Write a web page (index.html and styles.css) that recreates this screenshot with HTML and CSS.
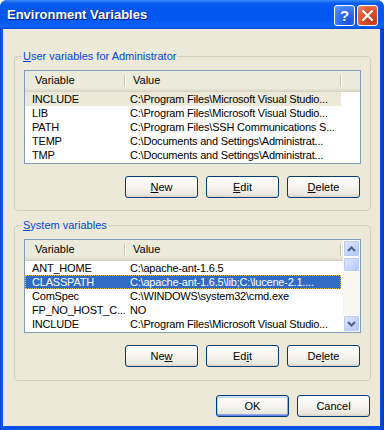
FILE: index.html
```html
<!DOCTYPE html>
<html lang="en">

<head>
    <meta charset="UTF-8">
    <meta name="viewport" content="width=device-width, initial-scale=1.0">
    <title>Environment Variables</title>
    <link rel="stylesheet" href="styles.css">
</head>

<body>
    <div class="window">
        <!-- title bar -->
        <div class="titlebar">
            <span class="title">Environment Variables</span>
            <div class="caption-buttons">
                <span class="cap help">?</span>
                <span class="cap close">
                    <svg width="13" height="13" viewBox="0 0 13 13">
                        <path d="M2 2 L11 11 M11 2 L2 11" stroke="#fff" stroke-width="2.2" stroke-linecap="round" />
                    </svg>
                </span>
            </div>
        </div>

        <div class="frame">
            <div class="client">
                <!-- user variables -->
                <fieldset class="group">
                    <legend><u>U</u>ser variables for Administrator</legend>
                    <div class="list">
                        <div class="list-main">
                            <div class="header">
                                <div class="hcol hvar">Variable</div>
                                <div class="hcol hval">Value</div>
                            </div>
                            <div class="row inactive"><span class="cvar">INCLUDE</span><span class="cval">C:\Program Files\Microsoft Visual Studio...</span></div>
                            <div class="row"><span class="cvar">LIB</span><span class="cval">C:\Program Files\Microsoft Visual Studio...</span></div>
                            <div class="row"><span class="cvar">PATH</span><span class="cval">C:\Program Files\SSH Communications S...</span></div>
                            <div class="row"><span class="cvar">TEMP</span><span class="cval">C:\Documents and Settings\Administrat...</span></div>
                            <div class="row"><span class="cvar">TMP</span><span class="cval">C:\Documents and Settings\Administrat...</span></div>
                        </div>
                    </div>
                    <div class="buttons">
                        <button class="btn"><u>N</u>ew</button>
                        <button class="btn"><u>E</u>dit</button>
                        <button class="btn"><u>D</u>elete</button>
                    </div>
                </fieldset>

                <!-- system variables -->
                <fieldset class="group second">
                    <legend><u>S</u>ystem variables</legend>
                    <div class="list">
                        <div class="list-main">
                            <div class="header">
                                <div class="hcol hvar">Variable</div>
                                <div class="hcol hval">Value</div>
                            </div>
                            <div class="row"><span class="cvar">ANT_HOME</span><span class="cval">C:\apache-ant-1.6.5</span></div>
                            <div class="row selected"><span class="cvar">CLASSPATH</span><span class="cval">C:\apache-ant-1.6.5\lib;C:\lucene-2.1....</span></div>
                            <div class="row"><span class="cvar">ComSpec</span><span class="cval">C:\WINDOWS\system32\cmd.exe</span></div>
                            <div class="row"><span class="cvar">FP_NO_HOST_C...</span><span class="cval">NO</span></div>
                            <div class="row"><span class="cvar">INCLUDE</span><span class="cval">C:\Program Files\Microsoft Visual Studio...</span></div>
                        </div>
                        <div class="scrollbar">
                            <div class="sb-btn">
                                <svg width="9" height="6" viewBox="0 0 9 6"><path d="M1 5 L4.5 1.5 L8 5" fill="none" stroke="#4D6185" stroke-width="2" /></svg>
                            </div>
                            <div class="sb-thumb"></div>
                            <div class="sb-track"></div>
                            <div class="sb-btn">
                                <svg width="9" height="6" viewBox="0 0 9 6"><path d="M1 1 L4.5 4.5 L8 1" fill="none" stroke="#4D6185" stroke-width="2" /></svg>
                            </div>
                        </div>
                    </div>
                    <div class="buttons">
                        <button class="btn">Ne<u>w</u></button>
                        <button class="btn">Ed<u>i</u>t</button>
                        <button class="btn">De<u>l</u>ete</button>
                    </div>
                </fieldset>

                <!-- OK / Cancel -->
                <div class="dialog-buttons">
                    <button class="btn default">OK</button>
                    <button class="btn">Cancel</button>
                </div>
            </div>
        </div>
    </div>
</body>

</html>
```

FILE: styles.css
```css
body {
    margin: 0;
    background-color: #fff;
    font-family: "Liberation Sans", Arial, sans-serif;
    font-size: 11px;
    color: #000;
}

.window {
    width: 384px;
    height: 430px;
    display: flex;
    flex-direction: column;
    border-radius: 7px 7px 0 0;
    overflow: hidden;
    background-color: #0A50E4;
}

/* title bar */
.titlebar {
    height: 29px;
    flex-shrink: 0;
    display: flex;
    align-items: center;
    justify-content: space-between;
    padding: 0 6px 0 7px;
    background: linear-gradient(#3C8EFB 0, #0A5FF0 3px, #0055EE 10px, #0058F2 20px, #0A63F8 26px, #004AD8 29px);
}

.title {
    color: #fff;
    font-weight: bold;
    font-size: 13px;
    text-shadow: 1px 1px #0A1A7A;
}

.caption-buttons {
    display: flex;
    gap: 2px;
    margin-top: 1px;
}

.cap {
    width: 19px;
    height: 19px;
    border: 1px solid #fff;
    border-radius: 3px;
    display: flex;
    align-items: center;
    justify-content: center;
    color: #fff;
}

.help {
    background: radial-gradient(circle at 70% 80%, #1A4FE0, #3B78F5 60%, #6C9CFA);
    font-weight: bold;
    font-size: 15px;
}

.close {
    background: radial-gradient(circle at 75% 80%, #C23A17, #E2552F 55%, #EE8E70);
}

/* window frame */
.frame {
    flex: 1;
    display: flex;
    padding: 0 4px 4px 3px;
    background: linear-gradient(to right, #0024C8 0, #1664EE 1px, #0A50E4 3px, #0A50E4 380px, #0339D0 383px);
}

.client {
    flex: 1;
    background-color: #ECE9D8;
    padding: 20px 9px 0 11px;
}

/* group boxes */
.group {
    margin: 0;
    min-width: 0;
    padding: 0 9px 12px 9px;
    border: 1px solid #D0D0BF;
    border-radius: 4px;
}

.group.second {
    margin-top: 7px;
    padding-bottom: 13px;
}

.group legend {
    color: #0046D5;
    line-height: 14px;
    padding: 0 1px;
    margin-left: -2px;
}

/* list views */
.list {
    margin-top: 7px;
    height: 94px;
    box-sizing: border-box;
    border: 1px solid #7F9DB9;
    background-color: #fff;
    display: flex;
}

.list-main {
    flex: 1;
    min-width: 0;
}

.header {
    height: 21px;
    box-sizing: border-box;
    display: flex;
    background-color: #EBEADB;
    box-shadow: inset 0 -1px #D6D2C2, inset 0 -2px #DEDBCB, inset 0 -3px #E4E1D2;
}

.hcol {
    position: relative;
    line-height: 19px;
    box-sizing: border-box;
}

.hcol::after {
    content: "";
    position: absolute;
    right: 0;
    top: 4px;
    bottom: 5px;
    width: 1px;
    background-color: #C7C5B2;
    box-shadow: 1px 0 #fff;
}

.hvar {
    width: 100px;
    padding-left: 10px;
}

.hval {
    width: 216px;
    padding-left: 8px;
}

.row {
    display: flex;
    width: 316px;
    height: 14px;
    line-height: 14px;
    box-sizing: border-box;
    letter-spacing: -0.2px;
}

.row span {
    white-space: nowrap;
    overflow: hidden;
    box-sizing: border-box;
}

.cvar {
    width: 100px;
    padding-left: 7px;
}

.cval {
    width: 216px;
    padding-left: 5px;
}

.row.inactive {
    background-color: #ECE9D8;
}

.row.selected {
    background-color: #316AC5;
    color: #fff;
    outline: 1px dotted #D9C25A;
    outline-offset: -1px;
}

/* scrollbar */
.scrollbar {
    width: 17px;
    display: flex;
    flex-direction: column;
    background-color: #F7F6F1;
}

.sb-btn,
.sb-thumb {
    box-sizing: border-box;
    border: 1px solid #fff;
    border-radius: 2px;
    background: linear-gradient(135deg, #E1EAFE, #C2D3FC 60%, #B2C7F7);
    box-shadow: 0 0 0 1px #B7CAF5 inset;
}

.sb-btn {
    height: 17px;
    display: flex;
    align-items: center;
    justify-content: center;
}

.sb-thumb {
    height: 15px;
}

.sb-track {
    flex: 1;
}

/* buttons */
.buttons,
.dialog-buttons {
    display: flex;
    justify-content: flex-end;
    gap: 8px;
    padding-right: 1px;
}

.buttons {
    margin-top: 12px;
}

.dialog-buttons {
    margin-top: 14px;
}

.btn {
    width: 73px;
    height: 22px;
    padding: 0;
    font-family: inherit;
    font-size: 11px;
    color: #000;
    border: 1px solid #003C74;
    border-radius: 3px;
    background: linear-gradient(#FFFFFF, #F5F4EF 50%, #EAE8E0 85%, #D8D4C6);
}

.btn.default {
    box-shadow: inset 0 1px #CEE7FF, inset 0 -1px #6982EE, inset 1px 0 #B8D2F7, inset -1px 0 #89ADE4, inset 0 2px #BCD4F6, inset 0 -2px #89ADE4;
}
```
